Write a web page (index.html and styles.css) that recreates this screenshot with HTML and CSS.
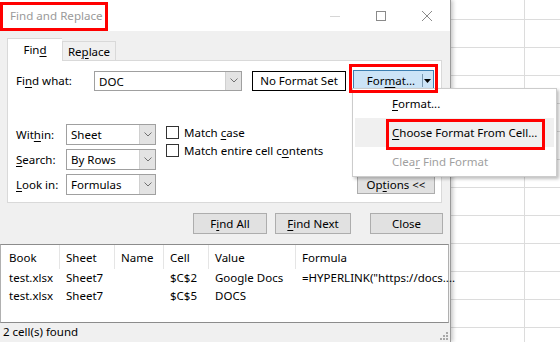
FILE: index.html
```html
<!DOCTYPE html>
<html>
<head lang="en">
    <meta charset="UTF-8">
    <title>Find and Replace</title>
    <link rel="stylesheet" href="styles.css">
</head>
<body>
    <div class="desk">
        <div class="dialog">
            <div class="titlebar">
                <span class="title">Find and Replace</span>
                <div class="caption">
                    <span class="cap-btn"><svg width="10" height="10" viewBox="0 0 10 10"><line x1="0" y1="5.5" x2="10" y2="5.5" stroke="#d6d6d6"/></svg></span>
                    <span class="cap-btn"><svg width="10" height="10" viewBox="0 0 10 10"><rect x="0.5" y="0.5" width="9" height="9" fill="none" stroke="#8a8a8a"/></svg></span>
                    <span class="cap-btn"><svg width="10" height="10" viewBox="0 0 10 10"><path d="M0 0L10 10M10 0L0 10" stroke="#8a8a8a" stroke-width="1"/></svg></span>
                </div>
            </div>
            <div class="body">
                <div class="tabs">
                    <div class="tab active"><span>Fin<u>d</u></span></div>
                    <div class="tab"><span>Re<u>p</u>lace</span></div>
                </div>
                <div class="panel">
                    <div class="find-row">
                        <label class="find-label">Fi<u>n</u>d what:</label>
                        <div class="combo wide">
                            <span class="combo-text">DOC</span>
                            <span class="combo-arrow"><svg width="8" height="5" viewBox="0 0 8 5"><path d="M0.5 0.5L4 4L7.5 0.5" fill="none" stroke="#707070"/></svg></span>
                        </div>
                        <div class="no-format">No Format Set</div>
                        <div class="split-btn">
                            <span class="split-main"><span>For<u>m</u>at...</span></span>
                            <span class="split-drop"><svg width="7" height="4" viewBox="0 0 7 4"><path d="M0 0H7L3.5 4Z" fill="#000"/></svg></span>
                        </div>
                    </div>
                    <div class="opts">
                        <div class="selects">
                            <div class="sel-row">
                                <label class="sel-label">Wit<u>h</u>in:</label>
                                <div class="combo">
                                    <span class="combo-text">Sheet</span>
                                    <span class="combo-arrow"><svg width="8" height="5" viewBox="0 0 8 5"><path d="M0.5 0.5L4 4L7.5 0.5" fill="none" stroke="#707070"/></svg></span>
                                </div>
                            </div>
                            <div class="sel-row">
                                <label class="sel-label"><u>S</u>earch:</label>
                                <div class="combo">
                                    <span class="combo-text">By Rows</span>
                                    <span class="combo-arrow"><svg width="8" height="5" viewBox="0 0 8 5"><path d="M0.5 0.5L4 4L7.5 0.5" fill="none" stroke="#707070"/></svg></span>
                                </div>
                            </div>
                            <div class="sel-row">
                                <label class="sel-label"><u>L</u>ook in:</label>
                                <div class="combo">
                                    <span class="combo-text">Formulas</span>
                                    <span class="combo-arrow"><svg width="8" height="5" viewBox="0 0 8 5"><path d="M0.5 0.5L4 4L7.5 0.5" fill="none" stroke="#707070"/></svg></span>
                                </div>
                            </div>
                        </div>
                        <div class="checks">
                            <div class="check"><span class="box"></span><span>Match <u>c</u>ase</span></div>
                            <div class="check"><span class="box"></span><span>Match entire cell c<u>o</u>ntents</span></div>
                        </div>
                        <div class="btn options"><span>Op<u>t</u>ions &lt;&lt;</span></div>
                    </div>
                </div>
                <div class="actions">
                    <div class="btn find-all"><span>F<u>i</u>nd All</span></div>
                    <div class="btn find-next"><span><u>F</u>ind Next</span></div>
                    <div class="btn close">Close</div>
                </div>
            </div>
            <div class="results">
                <div class="grid head">
                    <span>Book</span><span>Sheet</span><span>Name</span><span>Cell</span><span>Value</span><span>Formula</span>
                </div>
                <div class="grid row">
                    <span>test.xlsx</span><span>Sheet7</span><span></span><span>$C$2</span><span>Google Docs</span><span>=HYPERLINK("https://docs....</span>
                </div>
                <div class="grid row">
                    <span>test.xlsx</span><span>Sheet7</span><span></span><span>$C$5</span><span>DOCS</span><span></span>
                </div>
            </div>
            <div class="status">
                2 cell(s) found
                <svg class="grip" width="8" height="8" viewBox="0 0 8 8"><g fill="#a8a8a8"><rect x="6" y="0" width="2" height="2"/><rect x="3" y="3" width="2" height="2"/><rect x="6" y="3" width="2" height="2"/><rect x="0" y="6" width="2" height="2"/><rect x="3" y="6" width="2" height="2"/><rect x="6" y="6" width="2" height="2"/></g></svg>
            </div>
        </div>

        <div class="menu">
            <div class="menu-item"><span><u>F</u>ormat...</span></div>
            <div class="menu-item hover"><span><u>C</u>hoose Format From Cell...</span></div>
            <div class="menu-item disabled"><span>Clea<u>r</u> Find Format</span></div>
        </div>

        <div class="mark mark-title"></div>
        <div class="mark mark-format"></div>
        <div class="mark mark-choose"></div>
    </div>
</body>
</html>
```

FILE: styles.css
```css
* {
    box-sizing: border-box;
}

body {
    margin: 0;
    font-family: "Noto Sans", "Open Sans", sans-serif;
    font-size: 11.5px;
    color: #000;
}

u {
    text-decoration-thickness: 1px;
    text-underline-offset: 2px;
}

.desk {
    position: relative;
    width: 560px;
    height: 342px;
    overflow: hidden;
    background-color: #fff;
    background-image:
        linear-gradient(to bottom, #dcdcdc 1px, transparent 1px),
        linear-gradient(to right, #dcdcdc 1px, transparent 1px);
    background-size: 100% 28px, 100px 100%;
    background-position: 0 19px, 24px 0;
}

/* dialog window */

.dialog {
    width: 451px;
    height: 342px;
    display: flex;
    flex-direction: column;
    background: #f0f0f0;
    border-right: 1px solid #9a9a9a;
    box-shadow: 2px 0 4px rgba(0, 0, 0, .22);
}

.titlebar {
    height: 31px;
    flex: none;
    display: flex;
    align-items: center;
    padding-left: 10px;
    background: #fff;
}

.title {
    color: #9a9a9a;
    font-size: 11.6px;
}

.caption {
    margin-left: auto;
    display: flex;
}

.cap-btn {
    width: 46px;
    height: 31px;
    display: flex;
    align-items: center;
    justify-content: center;
}

.body {
    padding: 7px 8px 0 7px;
}

.tabs {
    display: flex;
    align-items: flex-end;
    height: 22px;
}

.tab {
    height: 19px;
    width: 54px;
    border: 1px solid #d9d9d9;
    border-bottom: none;
    display: flex;
    align-items: center;
    justify-content: center;
    background: #f0f0f0;
}

.tab.active {
    height: 23px;
    width: 55px;
    margin-bottom: -1px;
    background: #fff;
    border-right: none;
    position: relative;
    z-index: 1;
    padding-bottom: 2px;
}

.panel {
    height: 143px;
    background: #fff;
    border: 1px solid #d9d9d9;
    padding: 9px 6px 0 8px;
}

.find-row {
    display: flex;
    align-items: center;
    height: 21px;
}

.find-label {
    width: 78px;
}

.combo {
    width: 90px;
    height: 21px;
    border: 1px solid #a0a0a0;
    display: flex;
    background: #fff;
}

.combo.wide {
    width: 148px;
    height: 20px;
}

.combo-text {
    flex: 1;
    padding-left: 4px;
    line-height: 19px;
}

.combo-arrow {
    width: 16px;
    background: #e3e3e3;
    border-left: 1px solid #d0d0d0;
    display: flex;
    align-items: center;
    justify-content: center;
}

.no-format {
    width: 94px;
    height: 20px;
    margin-left: 10px;
    border: 1px solid #000;
    display: flex;
    align-items: center;
    justify-content: center;
}

.split-btn {
    width: 81px;
    height: 21px;
    margin-left: 7px;
    display: flex;
    background: #cce4f7;
    border: 1px solid #3c7fb1;
}

.split-main {
    flex: 1;
    display: flex;
    align-items: center;
    justify-content: center;
    padding-left: 6px;
}

.split-drop {
    width: 9px;
    margin: 3px 2px 3px 0;
    border-left: 1px solid #7a98b0;
    display: flex;
    align-items: center;
    justify-content: center;
}

.opts {
    display: flex;
    margin-top: 33px;
}

.selects {
    display: flex;
    flex-direction: column;
    gap: 4px;
}

.sel-row {
    display: flex;
    align-items: center;
}

.sel-label {
    width: 50px;
}

.checks {
    margin-left: 10px;
    padding-top: 2px;
    display: flex;
    flex-direction: column;
    gap: 5px;
}

.check {
    display: flex;
    align-items: center;
    height: 13px;
    line-height: 13px;
}

.box {
    width: 13px;
    height: 13px;
    border: 1px solid #333;
    margin-right: 5px;
    background: #fff;
}

.btn {
    height: 21px;
    background: #e1e1e1;
    border: 1px solid #adadad;
    display: flex;
    align-items: center;
    justify-content: center;
}

.options {
    width: 78px;
    height: 20px;
    margin-left: auto;
    align-self: flex-end;
    margin-bottom: 1px;
}

.actions {
    display: flex;
    justify-content: flex-end;
    margin: 10px -1px 10px 0;
}

.find-all {
    width: 74px;
}

.find-next {
    width: 76px;
    margin-left: 8px;
}

.close {
    width: 73px;
    margin-left: 19px;
}

/* results list */

.results {
    height: 79px;
    flex: none;
    background: #fff;
    border: 1px solid #8c8c8c;
    border-left-color: #b0b0b0;
    border-right: 1px solid #b0b0b0;
    margin-right: 1px;
}

.grid {
    display: grid;
    grid-template-columns: 58px 55px 49px 45px 87px 1fr;
}

.grid span {
    padding-left: 6px;
    white-space: nowrap;
}

.grid span:first-child {
    padding-left: 8px;
}

.head {
    height: 24px;
    align-items: stretch;
}

.head span {
    display: flex;
    align-items: center;
    border-left: 1px solid #e5e5e5;
}

.head span:first-child {
    border-left: none;
}

.row {
    height: 18px;
    line-height: 18px;
}

.row span {
    padding-left: 7px;
}

.status {
    flex: 1;
    display: flex;
    align-items: center;
    padding: 0 3px 2px;
    position: relative;
}

.grip {
    position: absolute;
    right: 2px;
    bottom: 2px;
}

/* dropdown menu */

.menu {
    position: absolute;
    left: 352px;
    top: 88px;
    width: 205px;
    height: 89px;
    background: #fff;
    border: 1px solid #cccccc;
    box-shadow: 2px 2px 3px rgba(0, 0, 0, .25);
}

.menu-item {
    height: 29px;
    display: flex;
    align-items: center;
    padding-left: 39px;
}

.menu-item.hover {
    background: #f0f0f0;
    margin: 0 2px;
    padding-left: 37px;
}

.menu-item.disabled {
    color: #a0a0a0;
}

/* red annotation boxes */

.mark {
    position: absolute;
    border: 3px solid #ff0000;
}

.mark-title {
    left: 0;
    top: 2px;
    width: 108px;
    height: 29px;
}

.mark-format {
    left: 349px;
    top: 64px;
    width: 89px;
    height: 29px;
}

.mark-choose {
    left: 386px;
    top: 119px;
    width: 159px;
    height: 31px;
}
```
